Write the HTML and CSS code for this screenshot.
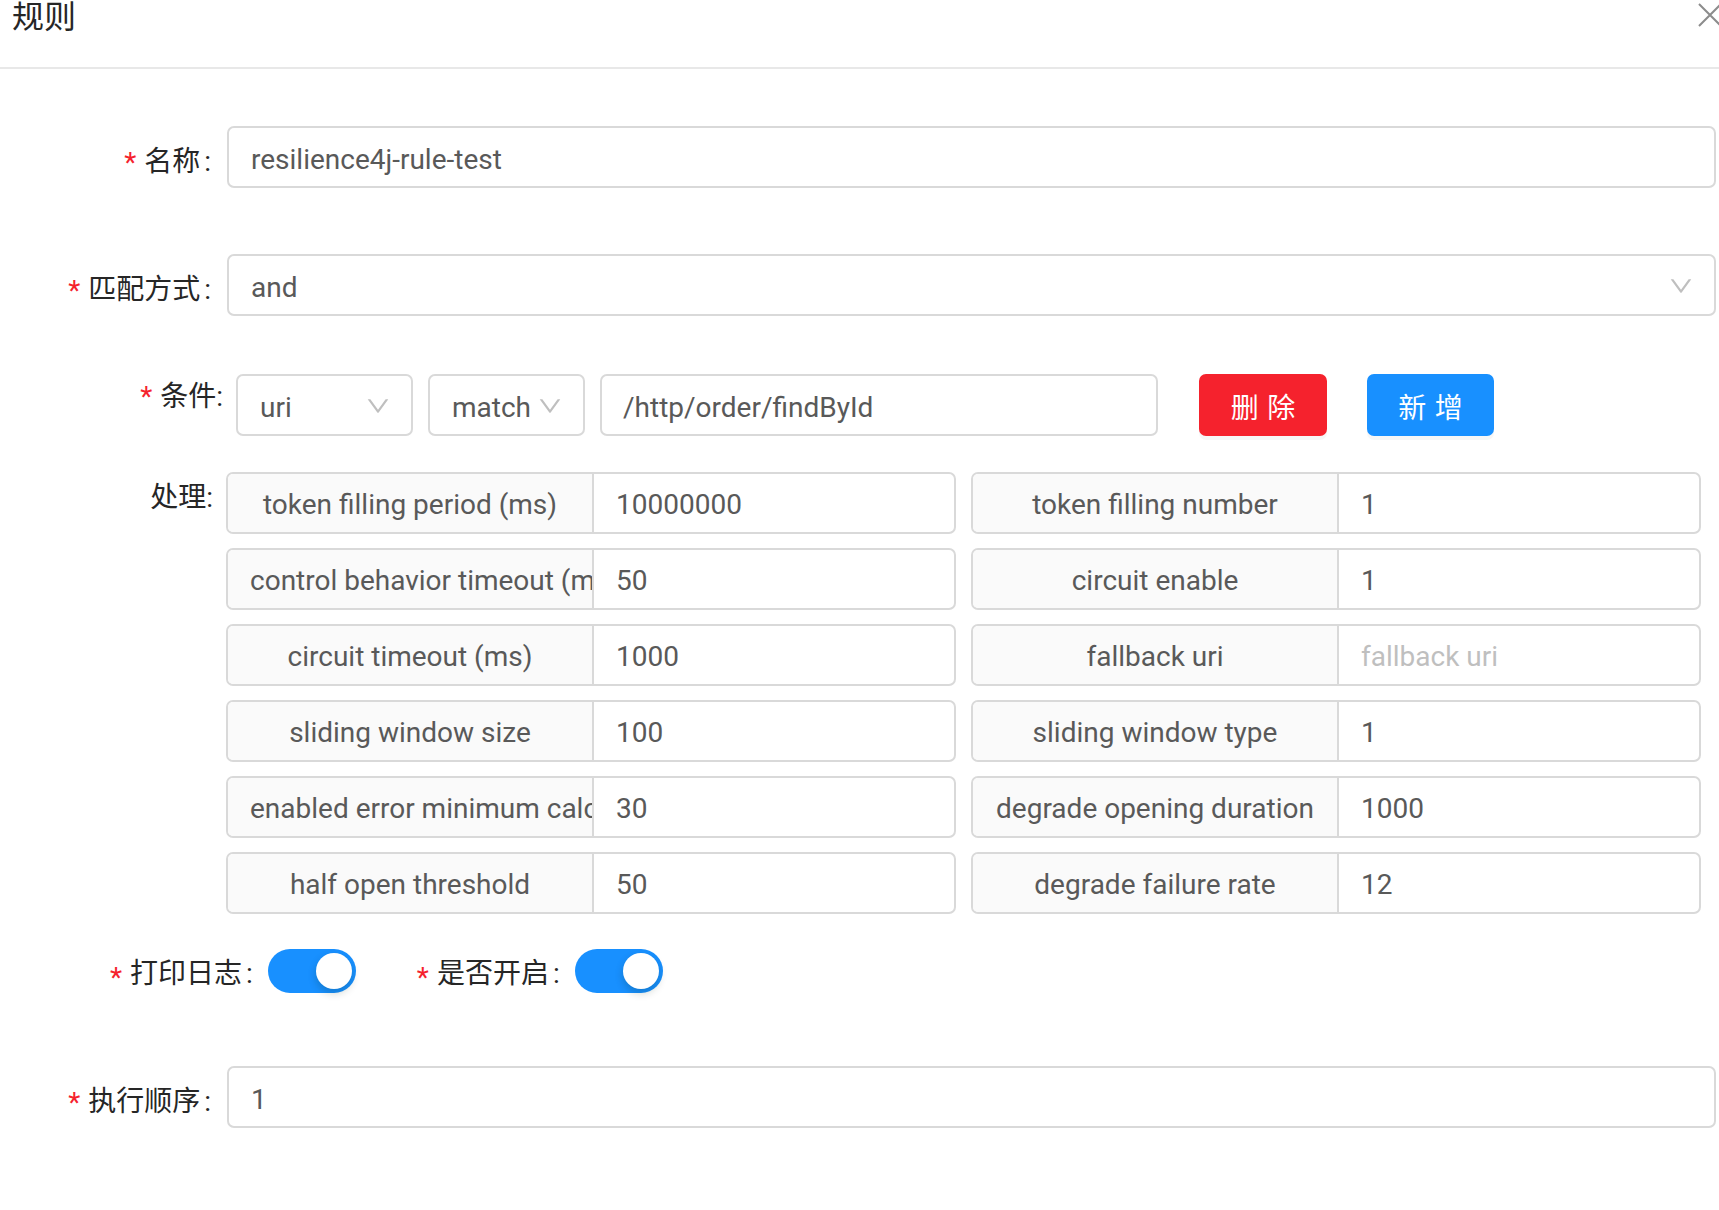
FILE: index.html
```html
<!DOCTYPE html>
<html lang="zh-CN">
<head>
<meta charset="utf-8">
<title>规则</title>
<link rel="stylesheet" href="styles.css">
</head>
<body>
<div class="modal">
  <div class="modal-header">
    <div class="modal-title">规则</div>
    <svg class="close" width="21" height="24" viewBox="0 0 21 24">
      <path d="M1 1 L23 23 M23 1 L1 23" stroke="#8c8c8c" stroke-width="2" fill="none"/>
    </svg>
  </div>

  <div class="form">
    <div class="form-item item-name">
      <div class="label"><span class="req">*</span>名称<span class="colon">:</span></div>
      <div class="input">resilience4j-rule-test</div>
    </div>

    <div class="form-item item-match">
      <div class="label"><span class="req">*</span>匹配方式<span class="colon">:</span></div>
      <div class="input select">
        <span>and</span>
        <svg class="arrow" width="24" height="24" viewBox="64 64 896 896"><path d="M884 256h-75c-5.1 0-9.9 2.5-12.9 6.6L512 654.2 227.9 262.6c-3-4.1-7.8-6.6-12.9-6.6h-75c-6.5 0-10.3 7.4-6.5 12.7l352.6 486.1c12.8 17.6 39 17.6 51.7 0l352.6-486.1c3.9-5.3.1-12.7-6.4-12.7z"/></svg>
      </div>
    </div>

    <div class="form-item item-cond">
      <div class="label label-cond"><span class="req req-top">*</span>条件:</div>
      <div class="cond-controls">
        <div class="input select sel-uri">
          <span>uri</span>
          <svg class="arrow" width="24" height="24" viewBox="64 64 896 896"><path d="M884 256h-75c-5.1 0-9.9 2.5-12.9 6.6L512 654.2 227.9 262.6c-3-4.1-7.8-6.6-12.9-6.6h-75c-6.5 0-10.3 7.4-6.5 12.7l352.6 486.1c12.8 17.6 39 17.6 51.7 0l352.6-486.1c3.9-5.3.1-12.7-6.4-12.7z"/></svg>
        </div>
        <div class="input select sel-match">
          <span>match</span>
          <svg class="arrow" width="24" height="24" viewBox="64 64 896 896"><path d="M884 256h-75c-5.1 0-9.9 2.5-12.9 6.6L512 654.2 227.9 262.6c-3-4.1-7.8-6.6-12.9-6.6h-75c-6.5 0-10.3 7.4-6.5 12.7l352.6 486.1c12.8 17.6 39 17.6 51.7 0l352.6-486.1c3.9-5.3.1-12.7-6.4-12.7z"/></svg>
        </div>
        <div class="input inp-path">/http/order/findById</div>
        <div class="btn btn-danger"><span>删除</span></div>
        <div class="btn btn-primary"><span>新增</span></div>
      </div>
    </div>

    <div class="form-item item-proc">
      <div class="label label-proc">处理:</div>
      <div class="proc-grid">
        <div class="group"><div class="addon">token filling period (ms)</div><div class="gval">10000000</div></div>
        <div class="group"><div class="addon">token filling number</div><div class="gval">1</div></div>
        <div class="group"><div class="addon">control behavior timeout (ms)</div><div class="gval">50</div></div>
        <div class="group"><div class="addon">circuit enable</div><div class="gval">1</div></div>
        <div class="group"><div class="addon">circuit timeout (ms)</div><div class="gval">1000</div></div>
        <div class="group"><div class="addon">fallback uri</div><div class="gval placeholder">fallback uri</div></div>
        <div class="group"><div class="addon">sliding window size</div><div class="gval">100</div></div>
        <div class="group"><div class="addon">sliding window type</div><div class="gval">1</div></div>
        <div class="group"><div class="addon">enabled error minimum calculation count</div><div class="gval">30</div></div>
        <div class="group"><div class="addon">degrade opening duration</div><div class="gval">1000</div></div>
        <div class="group"><div class="addon">half open threshold</div><div class="gval">50</div></div>
        <div class="group"><div class="addon">degrade failure rate</div><div class="gval">12</div></div>
      </div>
    </div>

    <div class="form-item item-switch">
      <div class="sw-label sw-label-1"><span class="req">*</span>打印日志<span class="colon">:</span></div>
      <div class="switch"><span class="knob"></span></div>
      <div class="sw-label sw-label-2"><span class="req">*</span>是否开启<span class="colon">:</span></div>
      <div class="switch"><span class="knob"></span></div>
    </div>

    <div class="form-item item-order">
      <div class="label"><span class="req">*</span>执行顺序<span class="colon">:</span></div>
      <div class="input">1</div>
    </div>
  </div>
</div>
</body>
</html>
```

FILE: styles.css
```css
* {
  box-sizing: border-box;
}

html, body {
  margin: 0;
  padding: 0;
  background: #ffffff;
  overflow: hidden;
}

body {
  font-family: Roboto, "Noto Sans CJK SC", sans-serif;
  color: #595959;
  font-size: 28px;
}

.modal-header {
  height: 69px;
  border-bottom: 2px solid #e8e8e8;
  display: flex;
  justify-content: space-between;
  align-items: flex-start;
}

.modal-title {
  font-family: "Noto Sans CJK SC", sans-serif;
  font-size: 32px;
  line-height: 32px;
  color: #262626;
  margin: -2px 0 0 12px;
}

.close {
  margin-top: 3px;
  flex: none;
}

.form {
  padding-top: 57px;
  padding-right: 3px;
}

.form-item {
  display: flex;
  align-items: center;
}

.item-name {
  margin-bottom: 66px;
}

.item-match {
  margin-bottom: 58px;
}

.item-cond {
  align-items: flex-start;
  margin-bottom: 36px;
}

.item-proc {
  align-items: flex-start;
  margin-bottom: 35px;
}

.item-switch {
  height: 44px;
  margin-bottom: 73px;
}

.label {
  width: 227px;
  flex: none;
  text-align: right;
  font-size: 28px;
  color: #262626;
  white-space: nowrap;
  padding-top: 4px;
}

.req {
  color: #f5222d;
  margin-right: 8px;
  display: inline-block;
  vertical-align: -1px;
  line-height: 1;
}

.req-top {
  vertical-align: baseline;
}

.colon {
  margin: 0 16px 0 4px;
}

.input {
  flex: 1;
  min-width: 0;
  height: 62px;
  border: 2px solid #d9d9d9;
  border-radius: 7px;
  padding: 4px 22px 0;
  display: flex;
  align-items: center;
  font-size: 28px;
  color: #595959;
  white-space: nowrap;
  background: #fff;
}

.select {
  padding-right: 21px;
}

.select .arrow {
  margin-left: auto;
  margin-top: -3px;
  flex: none;
  fill: #bfbfbf;
}

.label-cond {
  width: 223px;
  line-height: 42px;
  padding-top: 2px;
}

.cond-controls {
  display: flex;
  gap: 15px;
  margin-left: 13px;
}

.sel-uri {
  flex: none;
  width: 177px;
}

.sel-match {
  flex: none;
  width: 157px;
}

.inp-path {
  flex: none;
  width: 558px;
  padding-left: 21px;
}

.btn {
  flex: none;
  height: 62px;
  border-radius: 7px;
  display: flex;
  align-items: center;
  justify-content: center;
  color: #ffffff;
  font-family: "Noto Sans CJK SC", sans-serif;
  font-size: 28px;
  padding-top: 2px;
  box-shadow: 0 4px 0 rgba(0, 0, 0, 0.03);
}

.btn span {
  letter-spacing: 0.3em;
  margin-right: -0.3em;
}

.btn-danger {
  width: 128px;
  margin-left: 26px;
  background: #f5222d;
  border: 2px solid #f5222d;
}

.btn-primary {
  width: 127px;
  margin-left: 25px;
  background: #1890ff;
  border: 2px solid #1890ff;
}

.label-proc {
  width: 213px;
  line-height: 48px;
  padding-top: 2px;
}

.proc-grid {
  margin-left: 13px;
  display: grid;
  grid-template-columns: 730px 730px;
  column-gap: 15px;
  row-gap: 14px;
}

.group {
  display: flex;
  height: 62px;
  border: 2px solid #d9d9d9;
  border-radius: 7px;
  overflow: hidden;
}

.addon {
  flex: none;
  width: 366px;
  padding: 4px 22px 0;
  background: #fafafa;
  border-right: 2px solid #d9d9d9;
  text-align: center;
  white-space: nowrap;
  overflow: hidden;
  line-height: 54px;
  color: #595959;
}

.gval {
  flex: 1;
  padding: 4px 22px 0;
  line-height: 54px;
  color: #595959;
  white-space: nowrap;
}

.placeholder {
  color: #bfbfbf;
}

.sw-label {
  font-size: 28px;
  color: #262626;
  white-space: nowrap;
}

.sw-label .req {
  vertical-align: -4px;
}

.sw-label .colon {
  margin-right: 15px;
}

.sw-label-1 {
  margin-left: 110px;
}

.sw-label-2 {
  margin-left: 61px;
}

.switch {
  flex: none;
  width: 88px;
  height: 44px;
  border-radius: 22px;
  background: #1890ff;
  display: flex;
  align-items: center;
  justify-content: flex-end;
  padding: 0 4px;
}

.knob {
  width: 36px;
  height: 36px;
  border-radius: 50%;
  background: #ffffff;
  box-shadow: 0 4px 8px rgba(0, 35, 11, 0.2);
}
```
